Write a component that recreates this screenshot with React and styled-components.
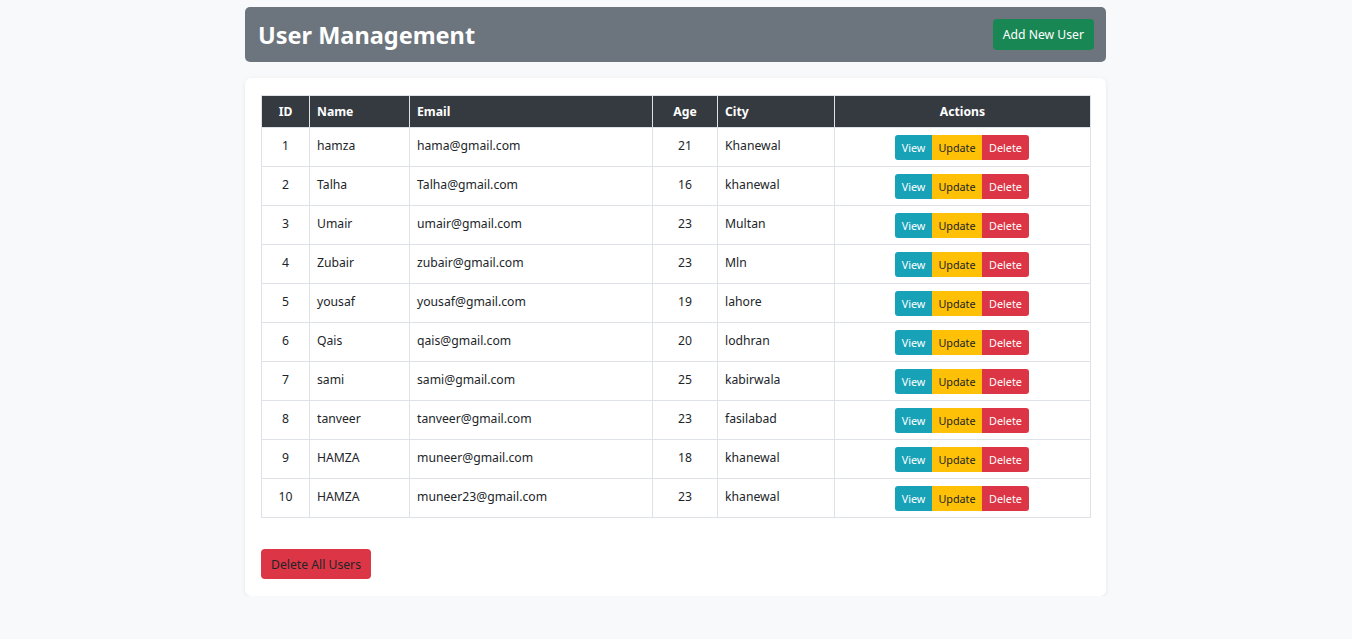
import React from "react";
import styled, { createGlobalStyle } from "styled-components";

const GlobalStyle = createGlobalStyle`
	body {
		margin: 0;
		background-color: #f8f9fa;
		font-family: "Noto Sans", "Open Sans", sans-serif;
		color: #212529;
	}
`;

const users = [
	{ id: 1, name: "hamza", email: "hama@gmail.com", age: 21, city: "Khanewal" },
	{ id: 2, name: "Talha", email: "Talha@gmail.com", age: 16, city: "khanewal" },
	{ id: 3, name: "Umair", email: "umair@gmail.com", age: 23, city: "Multan" },
	{ id: 4, name: "Zubair", email: "zubair@gmail.com", age: 23, city: "Mln" },
	{ id: 5, name: "yousaf", email: "yousaf@gmail.com", age: 19, city: "lahore" },
	{ id: 6, name: "Qais", email: "qais@gmail.com", age: 20, city: "lodhran" },
	{ id: 7, name: "sami", email: "sami@gmail.com", age: 25, city: "kabirwala" },
	{ id: 8, name: "tanveer", email: "tanveer@gmail.com", age: 23, city: "fasilabad" },
	{ id: 9, name: "HAMZA", email: "muneer@gmail.com", age: 18, city: "khanewal" },
	{ id: 10, name: "HAMZA", email: "muneer23@gmail.com", age: 23, city: "khanewal" },
];

const Page = styled.div`
	width: 861px;
	margin: 0 0 0 245px;
	padding-top: 7px;
	display: flex;
	flex-direction: column;
	gap: 16px;
`;

const Header = styled.div`
	height: 55px;
	background-color: #6c757d;
	border-radius: 5px;
	display: flex;
	align-items: center;
	justify-content: space-between;
	padding: 0 12px 0 13px;
	box-sizing: border-box;
`;

const Title = styled.h1`
	margin: 0;
	color: white;
	font-size: 23.5px;
	font-weight: 700;
`;

const Button = styled.button`
	border: none;
	border-radius: 4px;
	font-family: inherit;
	cursor: pointer;
	font-size: 12.2px;
	height: ${(props) => props.height || 30}px;
	padding: 0 10px;
	background-color: ${(props) => props.bg};
	color: ${(props) => props.color || "white"};
`;

const Card = styled.div`
	background: white;
	border-radius: 6px;
	box-shadow: 0 1px 4px rgba(0, 0, 0, 0.08);
	padding: 17px 16px 17px 16px;
`;

const Table = styled.table`
	width: 829px;
	border-collapse: collapse;
	table-layout: fixed;
	font-size: 12.2px;
	margin-bottom: 31px;
`;

const Th = styled.th`
	background-color: #343a40;
	color: white;
	font-weight: 700;
	height: 32px;
	padding: 0 7px;
	border: 1px solid #dee2e6;
	text-align: ${(props) => props.align || "left"};
	width: ${(props) => props.w}px;
	box-sizing: border-box;
`;

const Td = styled.td`
	height: 38px;
	padding: 0 7px;
	border: 1px solid #dee2e6;
	text-align: ${(props) => props.align || "left"};
	vertical-align: top;
	line-height: 36px;
	box-sizing: border-box;
`;

const ActionCell = styled.td`
	height: 38px;
	border: 1px solid #dee2e6;
	text-align: center;
	vertical-align: middle;
	padding: 0;
`;

const Group = styled.div`
	display: inline-flex;
	border-radius: 3px;
	overflow: hidden;
	vertical-align: middle;
	margin-left: -1px;
`;

const GroupButton = styled.button`
	border: none;
	font-family: inherit;
	font-size: 10.8px;
	height: 25px;
	width: ${(props) => props.w}px;
	padding: 0;
	background-color: ${(props) => props.bg};
	color: ${(props) => props.color};
`;

export default function App() {
	return (
		<>
			<GlobalStyle />
			<Page>
				<Header>
					<Title>User Management</Title>
					<Button bg="#198754" height={31}>Add New User</Button>
				</Header>
				<Card>
					<Table>
						<thead>
							<tr>
								<Th w={48} align="center">ID</Th>
								<Th w={100}>Name</Th>
								<Th w={243}>Email</Th>
								<Th w={65} align="center">Age</Th>
								<Th w={117}>City</Th>
								<Th w={256} align="center">Actions</Th>
							</tr>
						</thead>
						<tbody>
							{users.map((user) => (
								<tr key={user.id}>
									<Td align="center">{user.id}</Td>
									<Td>{user.name}</Td>
									<Td>{user.email}</Td>
									<Td align="center">{user.age}</Td>
									<Td>{user.city}</Td>
									<ActionCell>
										<Group>
											<GroupButton w={37} bg="#17a2b8" color="white">View</GroupButton>
											<GroupButton w={50} bg="#ffc107" color="#212529">Update</GroupButton>
											<GroupButton w={47} bg="#dc3545" color="white">Delete</GroupButton>
										</Group>
									</ActionCell>
								</tr>
							))}
						</tbody>
					</Table>
					<Button bg="#dc3545" color="#212529">Delete All Users</Button>
				</Card>
			</Page>
		</>
	);
}
